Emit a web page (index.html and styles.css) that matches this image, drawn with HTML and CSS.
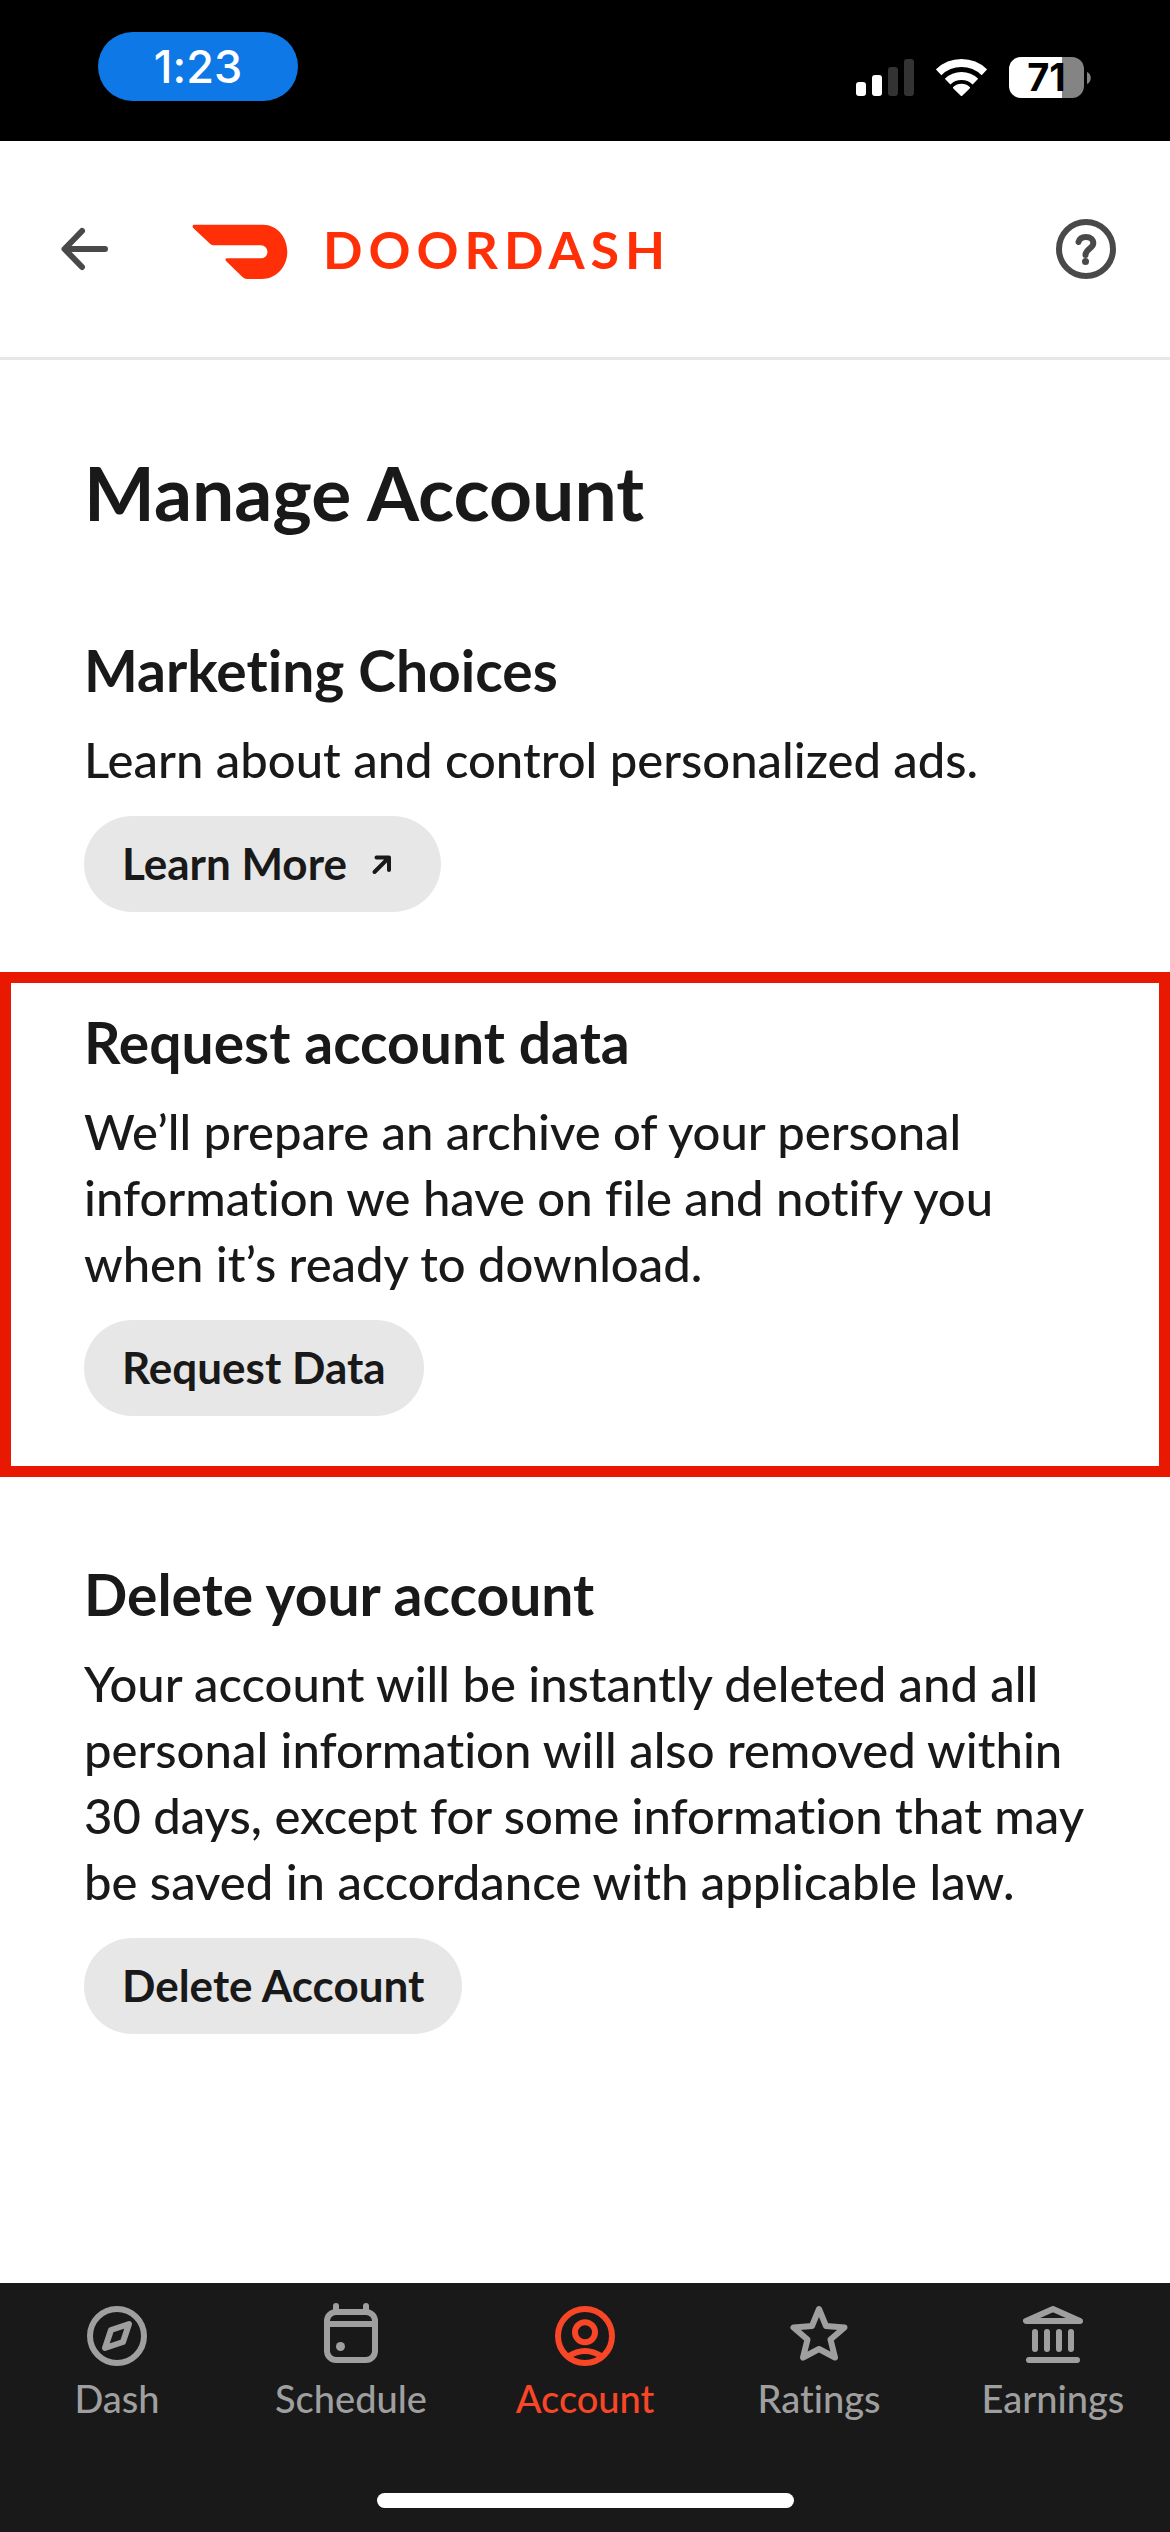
FILE: index.html
```html
<!DOCTYPE html>
<html lang="en">
<head>
  <meta charset="utf-8">
  <meta name="viewport" content="width=device-width, initial-scale=1">
  <title>Manage Account</title>
  <link rel="stylesheet" href="styles.css">
</head>
<body>
  <div class="status-bar">
    <span class="clock">1:23</span>
    <div class="status-icons">
      <svg class="signal" viewBox="0 0 58 37" aria-hidden="true">
        <rect x="0" y="23" width="10" height="14" rx="3"/>
        <rect x="16" y="16" width="10" height="21" rx="3"/>
        <rect class="dim" x="32" y="8" width="10" height="29" rx="3"/>
        <rect class="dim" x="48" y="0" width="10" height="37" rx="3"/>
      </svg>
      <svg class="wifi" viewBox="0 0 51 37" aria-hidden="true">
        <path class="band" d="M2.6 13.3A33 33 0 0 1 48.4 13.3M11.6 22.6A20 20 0 0 1 39.4 22.6"/>
        <path class="wedge" d="M25.5 36L18 28.8A11 11 0 0 1 33 28.8Z"/>
      </svg>
      <div class="battery">
        <span class="battery-level">71</span>
        <svg class="battery-nub" viewBox="0 0 4 12" aria-hidden="true"><path d="M0 0C5 2 5 10 0 12Z"/></svg>
      </div>
    </div>
  </div>

  <header class="app-header">
    <button class="icon-button" type="button" aria-label="Back">
      <svg class="icon" viewBox="0 0 72 72" aria-hidden="true"><path d="M34 18L16.500 36L34 54M17 36H57"/></svg>
    </button>
    <a class="brand" href="#">
      <svg class="brand-mark" viewBox="0 -6 96 62" aria-hidden="true">
        <path d="M2.5 .7H71C85 .7 95.3 13 95.3 28C95.3 43 84 55 70 55H55Q52.500 55 50.500 53L34.500 37.500C32.500 35.500 33.500 34.300 36 34.300H69A6.500 6.500 0 0 0 69 21.300H22Q19.700 21.300 18 19.700L1.500 4.200C-.2 2.400 .5 .7 2.500 .7Z"/>
      </svg>
      <span class="brand-name">DOORDASH</span>
    </a>
    <button class="icon-button help" type="button" aria-label="Help">
      <svg class="icon" viewBox="0 0 72 72" aria-hidden="true">
        <circle cx="36" cy="36" r="27"/>
        <path d="M28.500 29C29.500 25.500 32 24 35.800 24C40.500 24 43.300 26.600 43.300 30.300C43.300 35.500 35.500 36 35.500 42"/>
        <circle class="dot" cx="35.500" cy="48.500" r="3.500"/>
      </svg>
    </button>
  </header>

  <main class="content">
    <h1 class="page-title">Manage Account</h1>

    <section class="section">
      <h2 class="section-title">Marketing Choices</h2>
      <p class="section-text">Learn about and control personalized ads.</p>
      <button class="pill" type="button">Learn More
        <svg class="pill-icon" viewBox="0 0 48 48" aria-hidden="true"><path d="M19.500 33L33.500 19M21.500 18.500H34V31"/></svg>
      </button>
    </section>

    <section class="section highlighted">
      <h2 class="section-title">Request account data</h2>
      <p class="section-text">We’ll prepare an archive of your personal information we have on file and notify you when it’s ready to download.</p>
      <button class="pill" type="button">Request Data</button>
    </section>

    <section class="section">
      <h2 class="section-title">Delete your account</h2>
      <p class="section-text">Your account will be instantly deleted and all personal information will also removed within 30 days, except for some information that may be saved in accordance with applicable law.</p>
      <button class="pill" type="button">Delete Account</button>
    </section>
  </main>

  <footer class="bottom-bar">
    <nav class="tabs" aria-label="Main">
      <a class="tab" href="#">
        <svg class="icon" viewBox="0 0 72 72" aria-hidden="true"><circle cx="36" cy="36" r="27"/><path d="M48 24L42 42L24 48L30 30Z"/></svg>
        Dash
      </a>
      <a class="tab" href="#">
        <svg class="icon" viewBox="0 0 72 72" aria-hidden="true"><rect x="12" y="12" width="48" height="48" rx="9"/><path d="M12 24H60M21 6V12M51 6V12"/><circle class="dot" cx="25.500" cy="46.500" r="4.500"/></svg>
        Schedule
      </a>
      <a class="tab active" href="#" aria-current="page">
        <svg class="icon" viewBox="0 0 72 72" aria-hidden="true"><circle cx="36" cy="36" r="27"/><circle cx="36" cy="32.300" r="10"/><path d="M19 56.500Q36 45.500 53 56.500"/></svg>
        Account
      </a>
      <a class="tab" href="#">
        <svg class="icon" viewBox="0 0 72 72" aria-hidden="true"><path d="M36 9L43 26L61.500 27.500L47.500 39.500L52 57.500L36 49L20 57.500L24.500 39.500L10.500 27.500L29 26Z"/></svg>
        Ratings
      </a>
      <a class="tab" href="#">
        <svg class="icon" viewBox="0 0 72 72" aria-hidden="true"><path d="M36 9L9 21H63ZM18 32V49M30 32V49M42 32V49M54 32V49M12 60H60"/></svg>
        Earnings
      </a>
    </nav>
    <div class="home-indicator"></div>
  </footer>
</body>
</html>
```
FILE: styles.css
```css
* {
  box-sizing: border-box;
}

body {
  margin: 0;
  min-height: 100vh;
  display: flex;
  flex-direction: column;
  background: #fff;
  color: #191919;
  font-family: Lato, "Open Sans", sans-serif;
  font-variant-ligatures: none;
}

h1,
h2,
p {
  margin: 0;
}

button {
  border: 0;
  padding: 0;
  background: none;
  color: inherit;
  font: inherit;
  font-variant-ligatures: none;
  cursor: pointer;
}

a {
  color: inherit;
  text-decoration: none;
}

svg {
  display: block;
  flex: none;
}

/* Status bar */
.status-bar {
  display: flex;
  justify-content: space-between;
  align-items: flex-start;
  height: 141px;
  padding: 32px 79px 0 98px;
  background: #000;
  color: #fff;
  font-family: Inter, sans-serif;
}

.clock {
  width: 200px;
  border-radius: 35px;
  background: #0d78e6;
  font-size: 45px;
  font-weight: 500;
  line-height: 69px;
  text-align: center;
}

.status-icons {
  display: flex;
  align-items: center;
  gap: 22px;
  margin-top: 25px;
}

.signal {
  width: 58px;
  height: 37px;
  fill: #fff;
}

.signal .dim {
  fill: #333;
}

.wifi {
  width: 51px;
  height: 37px;
}

.wifi .band {
  fill: none;
  stroke: #fff;
  stroke-width: 8;
}

.wifi .wedge {
  fill: #fff;
  stroke: #fff;
  stroke-width: 2;
  stroke-linejoin: round;
}

.battery {
  display: flex;
  align-items: center;
  gap: 3px;
}

.battery-level {
  width: 75px;
  border-radius: 12px;
  background: linear-gradient(to right, #fff 71%, #848484 71%);
  color: #000;
  font-size: 38px;
  font-weight: 700;
  line-height: 41px;
  text-align: center;
}

.battery-nub {
  width: 4px;
  height: 12px;
  fill: #848484;
}

/* App header */
.app-header {
  display: flex;
  align-items: center;
  height: 219px;
  padding: 0 48px;
  border-bottom: 3px solid #e7e7e7;
}

.icon {
  width: 72px;
  height: 72px;
  fill: none;
  stroke: currentColor;
  stroke-width: 6;
  stroke-linecap: round;
  stroke-linejoin: round;
}

.icon .dot {
  fill: currentColor;
  stroke: none;
}

.icon-button {
  color: #494949;
}

.help {
  margin-left: auto;
}

.brand {
  display: flex;
  align-items: center;
  gap: 35px;
  margin-left: 72px;
  color: #ff3008;
}

.brand-mark {
  width: 96px;
  height: 62px;
  fill: currentColor;
}

.brand-name {
  font-size: 52px;
  font-weight: 700;
  letter-spacing: 6px;
  line-height: 62px;
}

/* Content */
.content {
  flex: 1;
  padding-top: 87px;
}

.page-title {
  margin-bottom: 97px;
  padding: 0 76px 0 84px;
  font-size: 75px;
  font-weight: 700;
  line-height: 90px;
}

.section {
  padding: 0 76px 0 84px;
}

.section-title {
  margin-bottom: 20px;
  font-size: 57px;
  font-weight: 700;
  line-height: 72px;
}

.section-text {
  margin-bottom: 24px;
  font-size: 49px;
  font-weight: 500;
  line-height: 66px;
}

.highlighted {
  margin: 60px 0 77px;
  padding: 23px 65px 50px 73px;
  border: 11px solid #e81900;
}

.highlighted + .section {
  padding-top: 4px;
}

.pill {
  display: flex;
  align-items: center;
  gap: 8px;
  padding: 17px 38px 19px;
  border-radius: 48px;
  background: #e7e7e7;
  font-size: 44px;
  font-weight: 700;
  line-height: 60px;
}

.pill-icon {
  width: 48px;
  height: 48px;
  fill: none;
  stroke: currentColor;
  stroke-width: 4;
  stroke-linecap: round;
  stroke-linejoin: round;
}

/* Bottom navigation */
.bottom-bar {
  padding: 17px 0 24px;
  background: #191919;
}

.tabs {
  display: grid;
  grid-template-columns: repeat(5, 1fr);
  margin-bottom: 69px;
}

.tab {
  display: flex;
  flex-direction: column;
  align-items: center;
  color: #9f9f9f;
  font-size: 38px;
  font-weight: 500;
  line-height: 52px;
}

.tab.active {
  color: #f94626;
}

.home-indicator {
  width: 417px;
  height: 15px;
  margin: 0 auto;
  border-radius: 8px;
  background: #fff;
}
```
